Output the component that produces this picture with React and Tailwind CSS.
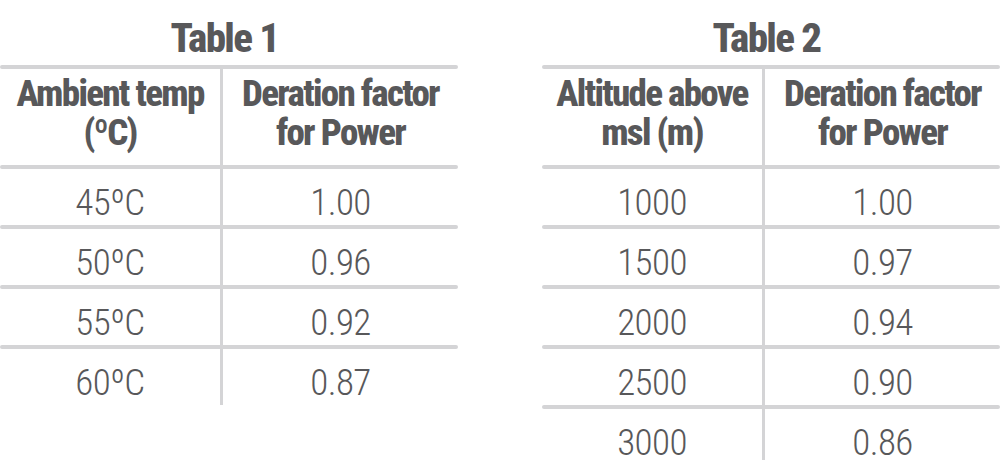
const FONT = { fontFamily: "'Roboto Condensed', Roboto, 'Liberation Sans', sans-serif" };

function Line() {
  return <div className="h-[4px] w-full rounded-full bg-[#d4d4d6]" />;
}

function Table({ title, head1, head2, rows }) {
  return (
    <div className="flex w-[458px] flex-col">
      <div className="h-[65px] w-[449px] pt-[14px] text-center text-[41px] font-extrabold leading-[48px] tracking-[-1.6px]">
        {title}
      </div>
      <Line />
      <div className="flex h-[96px]">
        <div className="flex w-[223px] flex-col items-center border-r-[3px] border-[#d4d4d6] pt-[5px] text-[37px] font-extrabold leading-[39px] tracking-[-1.7px]">
          <span>{head1[0]}</span>
          <span>{head1[1]}</span>
        </div>
        <div className="flex flex-1 flex-col items-center pt-[5px] text-[37px] font-extrabold leading-[39px] tracking-[-1.7px]">
          <span>{head2[0]}</span>
          <span>{head2[1]}</span>
        </div>
      </div>
      {rows.map(([a, b], i) => (
        <div key={i} className="flex flex-col">
          <Line />
          <div
            className={
              i === 4
                ? "flex h-[51px] text-[37px] font-[350] leading-[45px] tracking-[-0.6px]"
                : "flex h-[56px] text-[37px] font-[350] leading-[45px] tracking-[-0.6px]"
            }
          >
            <div className="flex w-[223px] items-start justify-center border-r-[3px] border-[#d4d4d6] pt-[11px]">
              {a}
            </div>
            <div className="flex flex-1 items-start justify-center pt-[11px]">{b}</div>
          </div>
        </div>
      ))}
    </div>
  );
}

export default function App() {
  return (
    <div className="flex h-[472px] w-[1000px] justify-between bg-white text-[#58585a]" style={FONT}>
      <Table
        title="Table 1"
        head1={["Ambient temp", "(ºC)"]}
        head2={["Deration factor", "for Power"]}
        rows={[
          ["45ºC", "1.00"],
          ["50ºC", "0.96"],
          ["55ºC", "0.92"],
          ["60ºC", "0.87"],
        ]}
      />
      <Table
        title="Table 2"
        head1={["Altitude above", "msl (m)"]}
        head2={["Deration factor", "for Power"]}
        rows={[
          ["1000", "1.00"],
          ["1500", "0.97"],
          ["2000", "0.94"],
          ["2500", "0.90"],
          ["3000", "0.86"],
        ]}
      />
    </div>
  );
}
